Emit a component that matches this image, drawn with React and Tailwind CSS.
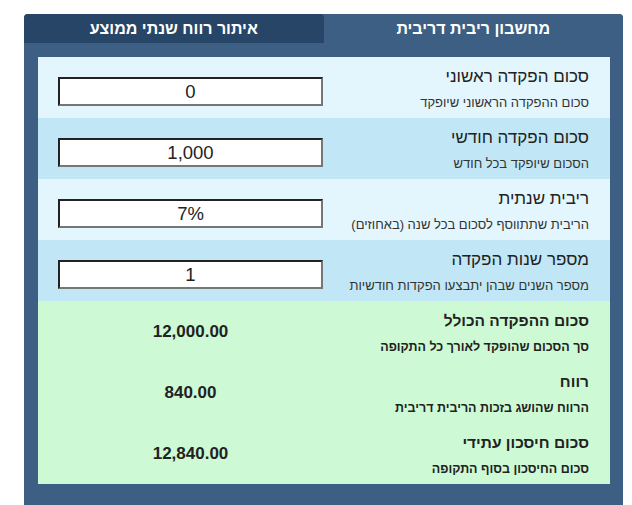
import { useState } from 'react';

const fields = [
  { title: 'סכום הפקדה ראשוני', sub: 'סכום ההפקדה הראשוני שיופקד', value: '0', bg: 'bg-[#e3f6fd]' },
  { title: 'סכום הפקדה חודשי', sub: 'הסכום שיופקד בכל חודש', value: '1,000', bg: 'bg-[#c1e7f6]' },
  { title: 'ריבית שנתית', sub: 'הריבית שתתווסף לסכום בכל שנה (באחוזים)', value: '7%', bg: 'bg-[#e3f6fd]' },
  { title: 'מספר שנות הפקדה', sub: 'מספר השנים שבהן יתבצעו הפקדות חודשיות', value: '1', bg: 'bg-[#c1e7f6]' },
];

const results = [
  { title: 'סכום ההפקדה הכולל', sub: 'סך הסכום שהופקד לאורך כל התקופה', value: '12,000.00' },
  { title: 'רווח', sub: 'הרווח שהושג בזכות הריבית דריבית', value: '840.00' },
  { title: 'סכום חיסכון עתידי', sub: 'סכום החיסכון בסוף התקופה', value: '12,840.00' },
];

export default function App() {
  const [tab, setTab] = useState('compound');

  return (
    <div className="min-h-screen bg-white pt-[14px] pl-[24px] font-['Liberation_Sans',Arial,sans-serif] text-[#222]">
      <div dir="rtl" className="w-[599px] bg-[#3d5f84] rounded-t-[4px]">
        {/* tabs */}
        <div className="grid grid-cols-2 h-[29px]">
          <button
            type="button"
            onClick={() => setTab('compound')}
            className={`rounded-t-[4px] pt-[1px] text-white font-bold text-[16px] ${tab === 'compound' ? 'bg-[#3d5f84]' : 'bg-[#274667]'}`}
          >
            מחשבון ריבית דריבית
          </button>
          <button
            type="button"
            onClick={() => setTab('annual')}
            className={`rounded-t-[4px] pt-[1px] text-white font-bold text-[16px] ${tab === 'annual' ? 'bg-[#3d5f84]' : 'bg-[#274667]'}`}
          >
            איתור רווח שנתי ממוצע
          </button>
        </div>

        <div className="pt-[14px] pb-[21px] pr-[13px] pl-[14px]">
          {fields.map((f) => (
            <div key={f.title} className={`grid grid-cols-2 h-[61px] ${f.bg}`}>
              <div className="pr-[21px] pt-[11px]">
                <div className="text-[17px] leading-[18px]">{f.title}</div>
                <div className="mt-[10px] text-[13px] leading-[14px] text-[#333]">{f.sub}</div>
              </div>
              <div className="flex justify-end items-start pt-[20px] pl-[20px]">
                <input
                  dir="ltr"
                  defaultValue={f.value}
                  className="w-[265px] h-[29px] bg-white border-2 border-t-[#222] border-l-[#222] border-b-[#767676] border-r-[#767676] text-center text-[18.5px] text-[#222] outline-none"
                />
              </div>
            </div>
          ))}

          <div className="bg-[#cdfad5]">
            {results.map((r) => (
              <div key={r.title} className="grid grid-cols-2 h-[61px]">
                <div className="pr-[21px] pt-[11px] font-bold">
                  <div className="text-[15.5px] leading-[18px]">{r.title}</div>
                  <div className="mt-[10px] text-[12.5px] leading-[14px]">{r.sub}</div>
                </div>
                <div className="flex justify-end items-center pl-[20px]">
                  <div dir="ltr" className="w-[265px] text-center text-[17px] font-bold">
                    {r.value}
                  </div>
                </div>
              </div>
            ))}
          </div>
        </div>
      </div>
    </div>
  );
}
